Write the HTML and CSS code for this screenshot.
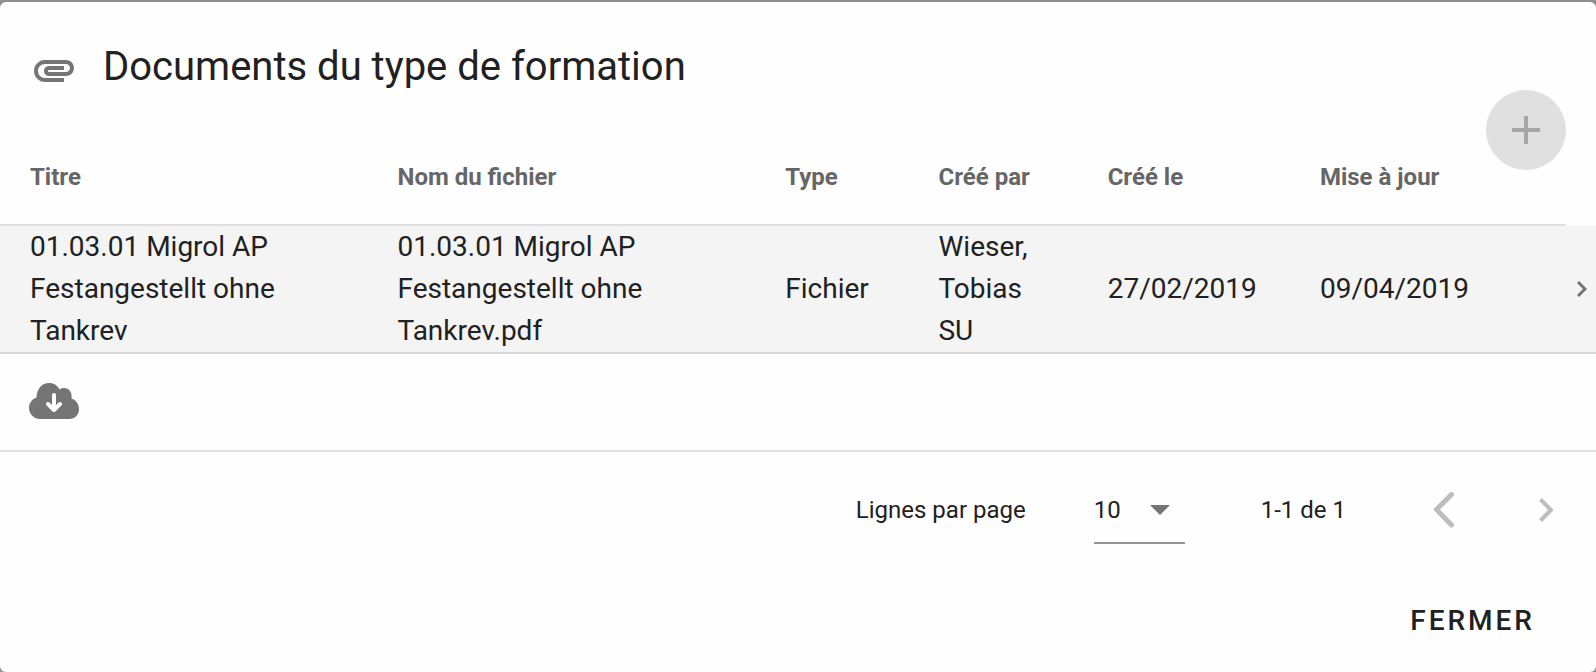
FILE: index.html
```html
<!DOCTYPE html>
<html lang="fr">
<head>
<meta charset="utf-8">
<title>Documents du type de formation</title>
<link rel="stylesheet" href="styles.css">
</head>
<body>
<main class="dialog" role="dialog" aria-labelledby="dialog-title">
  <header class="dialog-header">
    <svg class="icon-attachment" viewBox="0 0 24 24" aria-hidden="true"><path d="M2 12.5C2 9.46 4.46 7 7.5 7H18c2.21 0 4 1.79 4 4s-1.79 4-4 4H9.5C8.12 15 7 13.88 7 12.5S8.12 10 9.5 10H17v2H9.41c-.55 0-.55 1 0 1H18c1.1 0 2-.9 2-2s-.9-2-2-2H7.5C5.57 9 4 10.57 4 12.5S5.57 16 7.5 16H17v2H7.5C4.46 18 2 15.54 2 12.5z"/></svg>
    <h1 class="dialog-title" id="dialog-title">Documents du type de formation</h1>
    <button class="fab" type="button" aria-label="Ajouter" disabled>
      <svg class="icon-plus" viewBox="0 0 28 28" aria-hidden="true"><path d="M12 0h4v12h12v4H16v12h-4V16H0v-4h12z"/></svg>
    </button>
  </header>

  <table class="documents">
    <colgroup>
      <col class="col-title"><col class="col-file"><col class="col-type"><col class="col-author"><col class="col-created"><col class="col-updated"><col class="col-open">
    </colgroup>
    <thead>
      <tr>
        <th scope="col">Titre</th>
        <th scope="col">Nom du fichier</th>
        <th scope="col">Type</th>
        <th scope="col">Créé par</th>
        <th scope="col">Créé le</th>
        <th scope="col">Mise à jour</th>
        <td class="head-end"></td>
      </tr>
    </thead>
    <tbody>
      <tr class="document-row">
        <td>01.03.01 Migrol AP Festangestellt ohne Tankrev</td>
        <td>01.03.01 Migrol AP Festangestellt ohne Tankrev.pdf</td>
        <td>Fichier</td>
        <td>Wieser, Tobias SU</td>
        <td>27/02/2019</td>
        <td>09/04/2019</td>
        <td class="open-cell">
          <button class="icon-button" type="button" aria-label="Ouvrir">
            <svg class="icon-open" viewBox="0 0 10 16" aria-hidden="true"><path d="M1 1l7 7-7 7"/></svg>
          </button>
        </td>
      </tr>
      <tr class="action-row">
        <td colspan="7">
          <button class="icon-button" type="button" aria-label="Télécharger">
            <svg class="icon-cloud" viewBox="0 0 50 36" aria-hidden="true"><path class="cloud" d="M11 36C5 36 0 31 0 25c0-5 3-9 7.500-10.500C7.500 6 13 0 20 0c5 0 8.500 2.500 10.500 6.500C32 5.500 33 5 35 5c5 0 8.500 4.500 7.500 10.500C47 17 50 21 50 26c0 6-4 10-10 10z"/><path class="arrow" d="M25 12v14M19 21l6 6 6-6"/></svg>
          </button>
        </td>
      </tr>
    </tbody>
  </table>

  <nav class="pagination" aria-label="Pagination">
    <label class="rows-label" for="rows">Lignes par page</label>
    <div class="select-field">
      <select class="rows-select" id="rows"><option>10</option><option>25</option></select>
      <svg class="icon-caret" viewBox="0 0 20 10" aria-hidden="true"><path d="M0 0h20L10 10z"/></svg>
    </div>
    <span class="range">1-1 de 1</span>
    <button class="icon-button page-previous" type="button" aria-label="Page précédente" disabled>
      <svg class="icon-previous" viewBox="0 0 20 36" aria-hidden="true"><path d="M17.500 2.500L2.500 17.500l15 15.500"/></svg>
    </button>
    <button class="icon-button page-next" type="button" aria-label="Page suivante" disabled>
      <svg class="icon-next" viewBox="0 0 14 24" aria-hidden="true"><path d="M1.500 1.500L12 12 1.500 22.500"/></svg>
    </button>
  </nav>

  <footer class="dialog-actions">
    <button class="close-button" type="button">FERMER</button>
  </footer>
</main>
</body>
</html>
```
FILE: styles.css
```css
* {
  box-sizing: border-box;
}

body {
  margin: 0;
  padding-top: 2px;
  background: #8f8d8e;
  color: #212121;
  font-family: Roboto, "Noto Sans", sans-serif;
  font-size: 28px;
  line-height: 42px;
}

button {
  margin: 0;
  padding: 0;
  border: 0;
  background: none;
  color: inherit;
  font: inherit;
}

svg {
  display: block;
}

.dialog {
  position: relative;
  background: #fefefe;
  border-radius: 6px;
}

.dialog-header {
  display: flex;
  align-items: flex-start;
  gap: 25px;
  min-height: 128px;
  padding: 32px 30px 30px;
}

.icon-attachment {
  width: 48px;
  height: 48px;
  margin-top: 12px;
  fill: #757575;
}

.dialog-title {
  margin: 0;
  font-size: 40px;
  font-weight: 400;
  line-height: 66px;
}

.fab {
  position: absolute;
  top: 88px;
  right: 30px;
  display: grid;
  place-items: center;
  width: 80px;
  height: 80px;
  border-radius: 50%;
  background: #e0e0e0;
}

.icon-plus {
  width: 28px;
  height: 28px;
  fill: #a6a6a6;
}

.documents {
  width: 100%;
  border-collapse: separate;
  border-spacing: 0;
  table-layout: fixed;
}

.col-title { width: 22.9%; }
.col-file { width: 24.3%; }
.col-type { width: 9.6%; }
.col-author { width: 10.6%; }
.col-created { width: 13.3%; }
.col-open { width: 30px; }

.documents th,
.documents td {
  padding: 0 44px 0 32px;
  text-align: left;
}

.documents th:first-child,
.documents td:first-child {
  padding-left: 30px;
}

.documents th {
  height: 96px;
  border-bottom: 2px solid #e0e0e0;
  color: #666;
  font-size: 24px;
  font-weight: 700;
  white-space: nowrap;
}

.documents .head-end {
  padding: 0;
}

.document-row td {
  height: 128px;
  background: #f4f4f4;
  border-bottom: 2px solid #d8d8d8;
}

.documents .open-cell {
  padding: 0 8px 0 11px;
}

.documents .action-row td {
  height: 98px;
  padding: 0 29px 2px;
  border-bottom: 2px solid #e0e0e0;
}

.icon-button {
  display: block;
}

.icon-open,
.icon-previous,
.icon-next {
  fill: none;
  stroke: #bdbdbd;
}

.icon-open {
  width: 10px;
  height: 16px;
  stroke: #757575;
  stroke-width: 3;
}

.icon-cloud {
  width: 50px;
  height: 36px;
}

.cloud {
  fill: #757575;
}

.arrow {
  fill: none;
  stroke: #fff;
  stroke-width: 4;
  stroke-linecap: round;
  stroke-linejoin: round;
}

.pagination {
  display: flex;
  align-items: center;
  justify-content: flex-end;
  height: 116px;
  padding-right: 43px;
  font-size: 24px;
}

.select-field {
  display: grid;
  align-items: center;
  width: 91px;
  height: 68px;
  margin: 0 76px 0 68px;
  padding-top: 2px;
  border-bottom: 2px solid #949494;
}

.rows-select,
.icon-caret {
  grid-area: 1 / 1;
}

.rows-select {
  width: 100%;
  height: 100%;
  padding: 0;
  border: 0;
  background: transparent;
  color: inherit;
  font: inherit;
  appearance: none;
}

.icon-caret {
  justify-self: end;
  width: 20px;
  height: 10px;
  margin-right: 15px;
  fill: #757575;
  pointer-events: none;
}

.page-previous {
  margin: 0 85px 0 88px;
}

.icon-previous {
  width: 20px;
  height: 36px;
  stroke-width: 5;
  stroke-linecap: round;
  stroke-linejoin: round;
}

.icon-next {
  width: 14px;
  height: 24px;
  stroke-width: 4;
}

.dialog-actions {
  display: flex;
  justify-content: flex-end;
  padding: 17px 16px 15px;
}

.close-button {
  height: 72px;
  padding: 0 45px;
  font-weight: 500;
  letter-spacing: 3px;
}
```
